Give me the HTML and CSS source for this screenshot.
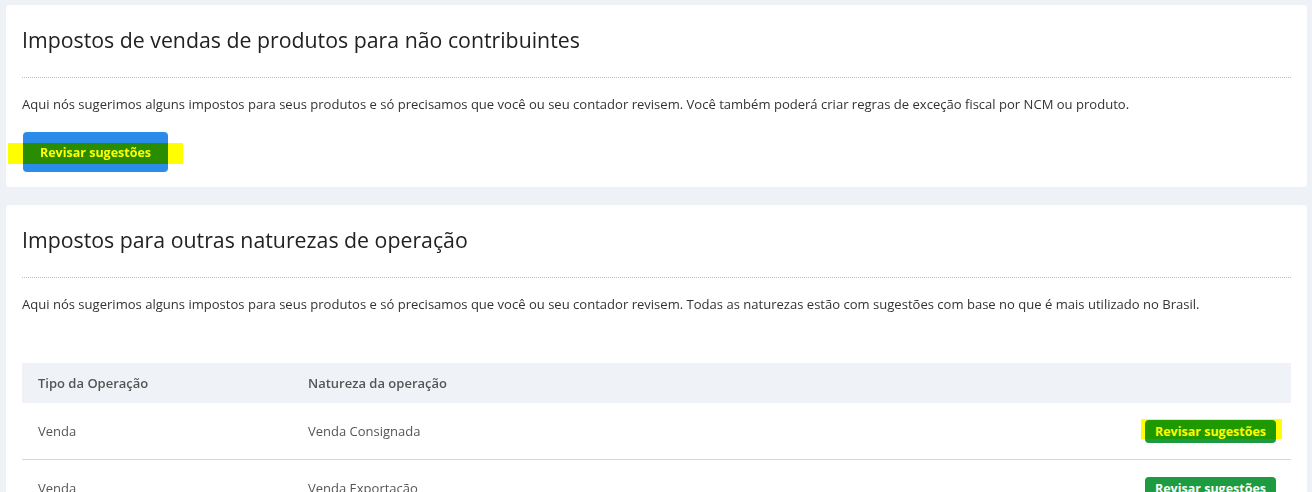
FILE: index.html
```html
<!DOCTYPE html>
<html lang="pt-BR">
<head>
    <meta charset="UTF-8">
    <meta name="viewport" content="width=device-width, initial-scale=1.0">
    <title>Impostos</title>
    <link rel="stylesheet" href="styles.css">
</head>
<body>
    <section class="card">
        <h2>Impostos de vendas de produtos para não contribuintes</h2>
        <p>Aqui nós sugerimos alguns impostos para seus produtos e só precisamos que você ou seu contador revisem. Você também poderá criar regras de exceção fiscal por NCM ou produto.</p>
        <button class="btn btn-blue">Revisar sugestões<span class="mark mark-wide"></span></button>
    </section>

    <section class="card">
        <h2>Impostos para outras naturezas de operação</h2>
        <p>Aqui nós sugerimos alguns impostos para seus produtos e só precisamos que você ou seu contador revisem. Todas as naturezas estão com sugestões com base no que é mais utilizado no Brasil.</p>

        <table class="ops">
            <thead>
                <tr>
                    <th class="col-tipo">Tipo da Operação</th>
                    <th>Natureza da operação</th>
                    <th></th>
                </tr>
            </thead>
            <tbody>
                <tr>
                    <td>Venda</td>
                    <td>Venda Consignada</td>
                    <td class="actions"><button class="btn btn-green">Revisar sugestões<span class="mark mark-tight"></span></button></td>
                </tr>
                <tr>
                    <td>Venda</td>
                    <td>Venda Exportação</td>
                    <td class="actions"><button class="btn btn-green">Revisar sugestões</button></td>
                </tr>
            </tbody>
        </table>
    </section>
</body>
</html>
```

FILE: styles.css
```css
body {
    margin: 0;
    padding: 5px 5px 0 6px;
    background: #eef1f6;
    font-family: "Open Sans", "Noto Sans", sans-serif;
    color: #333;
}
.card {
    background: #fff;
    border-radius: 4px;
    padding: 20px 16px 15px;
    margin-bottom: 18px;
}
h2 {
    font-size: 21.3px;
    font-weight: 400;
    line-height: 30px;
    margin: 0;
    padding-bottom: 22px;
    border-bottom: 1px dotted #bbb;
    color: #222;
}
p {
    font-size: 13.05px;
    line-height: 20px;
    margin: 16px 0 0;
}
.btn {
    position: relative;
    border: none;
    border-radius: 4px;
    color: #fff;
    font-family: inherit;
    font-weight: 700;
    cursor: pointer;
}
.btn-blue {
    background: #2a8ce8;
    height: 40px;
    width: 145px;
    font-size: 12.5px;
    margin: 18px 0 0 1px;
}
.btn-green {
    background: #1e9a40;
    height: 23px;
    width: 131px;
    font-size: 12.5px;
    padding: 0;
}
/* yellow marker drawn over the buttons */
.mark {
    position: absolute;
    background: #ffff00;
    mix-blend-mode: multiply;
}
.mark-wide {
    left: -15px;
    right: -15px;
    top: 11px;
    height: 21px;
}
.mark-tight {
    left: -4px;
    right: -6px;
    top: -1px;
    height: 20px;
}
.ops {
    width: 100%;
    border-collapse: collapse;
    margin-top: 49px;
    font-size: 13px;
    color: #555;
}
.ops th {
    background: #eff2f7;
    height: 40px;
    text-align: left;
    font-weight: 600;
    padding: 0 16px;
}
.ops th.col-tipo {
    width: 238px;
}
.ops td {
    height: 56px;
    padding: 0 16px;
    border-bottom: 1px solid #d3d9e1;
}
.ops td.actions {
    text-align: right;
    padding-right: 15px;
}
```
